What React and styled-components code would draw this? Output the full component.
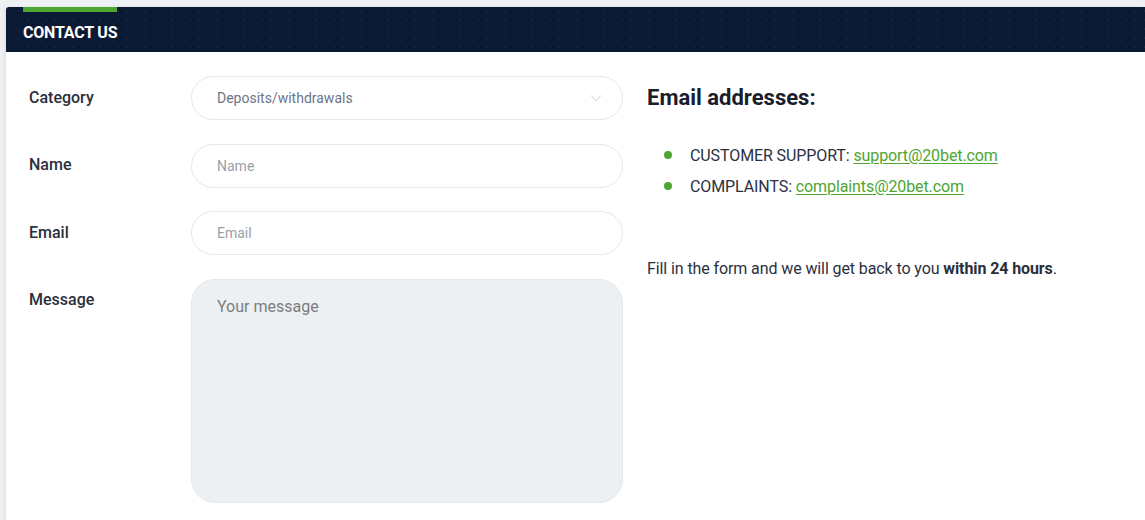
import styled, { createGlobalStyle } from "styled-components"

const GlobalStyle = createGlobalStyle`
    html, body {
        margin: 0;
        padding: 0;
        background: #eef0f4;
        font-family: Roboto, "Liberation Sans", Arial, sans-serif;
    }
    * { box-sizing: border-box; }
`

const Page = styled.div`
    padding: 7px 0 0 6px;
    height: 520px;
    overflow: hidden;
`

const Card = styled.section`
    background: #fff;
    border-radius: 3px 0 0 0;
    min-height: 520px;
    box-shadow: -2px 0 3px rgba(20, 30, 60, 0.06);
`

const Header = styled.header`
    height: 45px;
    background-color: #0b1a34;
    background-image: radial-gradient(rgba(255,255,255,0.05) 1px, transparent 1px);
    background-size: 9px 9px;
    border-radius: 3px 0 0 0;
    padding: 0 17px;
    display: flex;
    align-items: flex-start;
`

const Title = styled.h1`
    margin: 0;
    color: #fff;
    font-size: 16px;
    font-weight: 700;
    letter-spacing: -0.2px;
    text-transform: uppercase;
    border-top: 5px solid #4ea532;
    padding-top: 11px;
    line-height: 19px;
`

const Body = styled.div`
    display: flex;
    gap: 24px;
    padding: 24px 0 0 23px;
`

const Form = styled.form`
    width: 594px;
    display: flex;
    flex-direction: column;
    gap: 23.5px;
`

const Row = styled.div`
    display: grid;
    grid-template-columns: 162px 432px;
    align-items: ${({ top }) => (top ? "start" : "center")};
`

const Label = styled.label`
    font-size: 16px;
    font-weight: 500;
    color: #2a2f3b;
    padding-top: ${({ top }) => (top ? "13px" : "0")};
    margin-top: -2px;
`

const Field = styled.div`
    position: relative;
    height: 44px;
    border: 1px solid #e3e7ef;
    border-radius: 23px;
    display: flex;
    align-items: center;
    padding: 0 25px;
    font-size: 14px;
    color: ${({ value }) => (value ? "#6c7489" : "#9a9fa6")};
`

const Chevron = styled.svg`
    position: absolute;
    right: 20px;
    top: 17px;
`

const TextArea = styled.div`
    height: 224px;
    background: #edf0f3;
    border: 1px solid #e3e7ee;
    border-radius: 24px;
    padding: 17px 25px;
    font-size: 16px;
    color: #7a7d82;
`

const Info = styled.div`
    color: #2b3040;
    font-size: 16px;
    letter-spacing: -0.1px;
`

const InfoTitle = styled.h2`
    margin: 7px 0 0;
    font-size: 22px;
    font-weight: 700;
    color: #1a1d2b;
    line-height: 30px;
    letter-spacing: 0;
`

const List = styled.ul`
    list-style: none;
    margin: 27px 0 0;
    padding: 0 0 0 16px;
`

const Item = styled.li`
    position: relative;
    padding-left: 27px;
    line-height: 31px;
    &::before {
        content: "";
        position: absolute;
        left: 1px;
        top: 11px;
        width: 8px;
        height: 8px;
        border-radius: 50%;
        background: #4ea532;
    }
`

const Mail = styled.a`
    color: #4ea532;
    text-decoration: underline;
    text-underline-offset: 2px;
`

const Note = styled.p`
    margin: 56px 0 0;
    line-height: 22px;
    b { font-weight: 700; color: #2a2f3b; }
`

export default function App() {
    return (
        <>
            <GlobalStyle />
            <Page>
                <Card>
                    <Header>
                        <Title>Contact us</Title>
                    </Header>
                    <Body>
                        <Form>
                            <Row>
                                <Label>Category</Label>
                                <Field value>
                                    Deposits/withdrawals
                                    <Chevron width="12" height="8" viewBox="0 0 12 8">
                                        <path d="M1 1.5l5 5 5-5" fill="none" stroke="#dde2ea" strokeWidth="1.2" />
                                    </Chevron>
                                </Field>
                            </Row>
                            <Row>
                                <Label>Name</Label>
                                <Field>Name</Field>
                            </Row>
                            <Row>
                                <Label>Email</Label>
                                <Field>Email</Field>
                            </Row>
                            <Row top>
                                <Label top>Message</Label>
                                <TextArea>Your message</TextArea>
                            </Row>
                        </Form>
                        <Info>
                            <InfoTitle>Email addresses:</InfoTitle>
                            <List>
                                <Item>CUSTOMER SUPPORT: <Mail href="#">support@20bet.com</Mail></Item>
                                <Item>COMPLAINTS: <Mail href="#">complaints@20bet.com</Mail></Item>
                            </List>
                            <Note>Fill in the form and we will get back to you <b>within 24 hours</b>.</Note>
                        </Info>
                    </Body>
                </Card>
            </Page>
        </>
    )
}
